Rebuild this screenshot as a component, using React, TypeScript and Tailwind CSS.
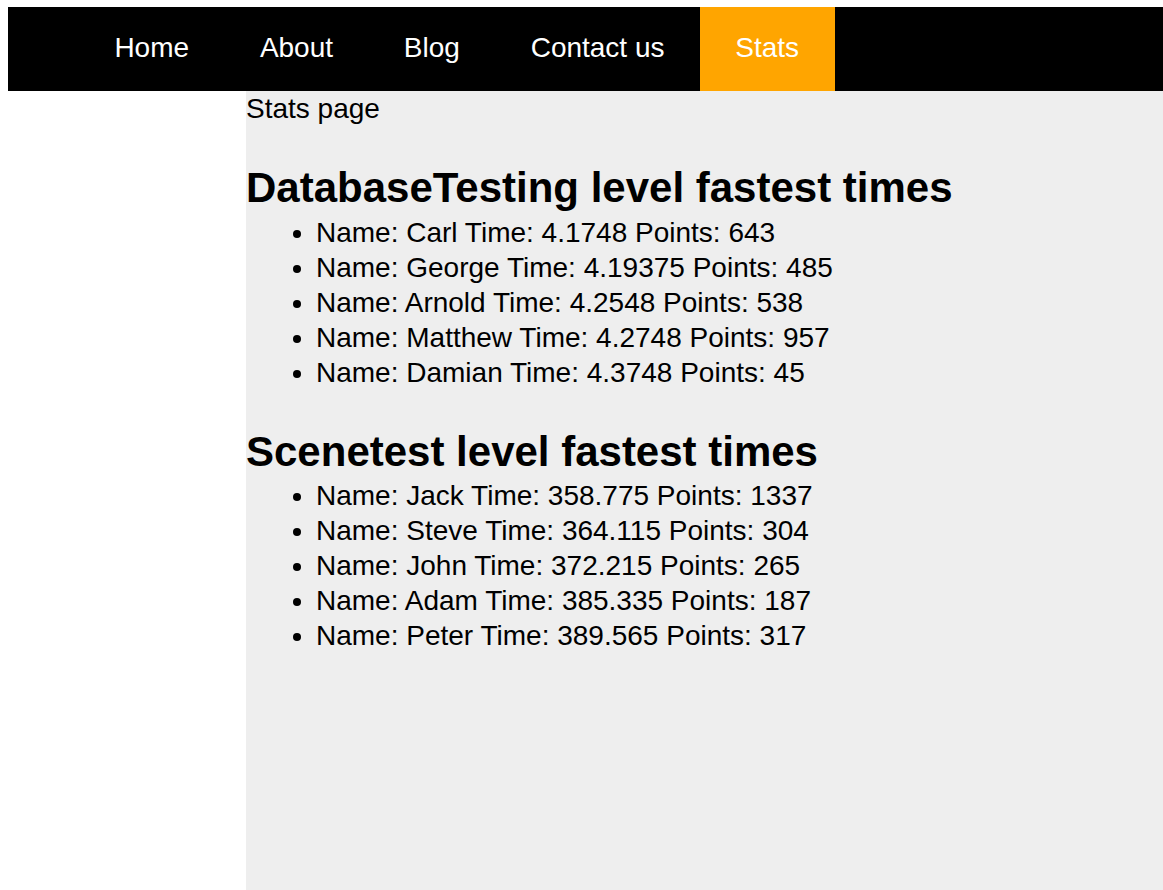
import React from 'react';

type Run = { name: string; time: string; points: number };

const levels: { title: string; runs: Run[] }[] = [
  {
    title: 'DatabaseTesting level fastest times',
    runs: [
      { name: 'Carl', time: '4.1748', points: 643 },
      { name: 'George', time: '4.19375', points: 485 },
      { name: 'Arnold', time: '4.2548', points: 538 },
      { name: 'Matthew', time: '4.2748', points: 957 },
      { name: 'Damian', time: '4.3748', points: 45 },
    ],
  },
  {
    title: 'Scenetest level fastest times',
    runs: [
      { name: 'Jack', time: '358.775', points: 1337 },
      { name: 'Steve', time: '364.115', points: 304 },
      { name: 'John', time: '372.215', points: 265 },
      { name: 'Adam', time: '385.335', points: 187 },
      { name: 'Peter', time: '389.565', points: 317 },
    ],
  },
];

const navItems = ['Home', 'About', 'Blog', 'Contact us', 'Stats'];

export default function App() {
  return (
    <div className="min-h-[890px] bg-white pt-[7px] pl-[8px] font-['Liberation_Sans',Arial,sans-serif] text-[28px] leading-[35px] text-black">
      <nav className="bg-black">
        <ul className="flex pl-[71px]">
          {navItems.map((item) => (
            <li key={item}>
              <a
                href="#"
                className={
                  item === 'Stats'
                    ? 'block px-[35.4px] pt-[23px] pb-[26px] bg-[#ffa500] text-white'
                    : 'block px-[35.4px] pt-[23px] pb-[26px] text-white'
                }
              >
                {item}
              </a>
            </li>
          ))}
        </ul>
      </nav>

      <div className="flex">
        {/* empty left column */}
        <div className="w-[238px] shrink-0" />

        <main className="flex-1 bg-[#eeeeee] min-h-[799px]">
          <div>Stats page</div>
          {levels.map((level) => (
            <section key={level.title}>
              <h2 className="mt-[36px] text-[42px] leading-[52.5px] font-bold">{level.title}</h2>
              <ul className="list-disc pl-[70px]">
                {level.runs.map((r) => (
                  <li key={r.name}>
                    Name: {r.name} Time: {r.time} Points: {r.points}
                  </li>
                ))}
              </ul>
            </section>
          ))}
        </main>
      </div>
    </div>
  );
}
